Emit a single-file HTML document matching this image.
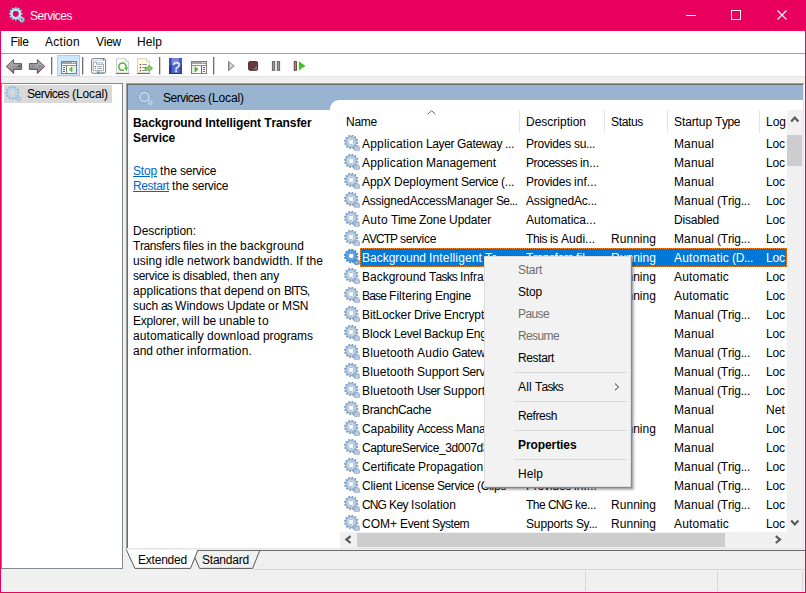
<!DOCTYPE html>
<html><head><meta charset="utf-8"><title>Services</title>
<style>
*{box-sizing:border-box;margin:0;padding:0}
html,body{width:806px;height:593px;overflow:hidden;background:#f0f0f0}
body{font-family:"Liberation Sans",sans-serif;font-size:12px;color:#000;position:relative;font-kerning:none}
body>span{position:absolute;white-space:pre;line-height:15px;height:15px}
body>div,body>i,body>svg{position:absolute;display:block}
.w{color:#fff}
.d{color:#6d6d6d}
.lnk{color:#0066cc;text-decoration:underline}
#pinkL{left:0;top:0;width:1px;height:593px;background:#e8005c}
#pinkR{left:805px;top:0;width:1px;height:593px;background:#e8005c}
#pinkB{left:0;top:592px;width:806px;height:1px;background:#e8005c}
#title{left:0;top:0;width:806px;height:31px;background:#e8005c}
#menu{left:1px;top:31px;width:804px;height:22px;background:#fff}
#menuline{left:1px;top:53px;width:804px;height:1px;background:#a0a0a0}
#tb{left:1px;top:54px;width:804px;height:22px;background:#fff}
#tbline{left:1px;top:76px;width:804px;height:1px;background:#e3e3e3}
#left{left:1px;top:83px;width:122px;height:486px;background:#fff;border:1px solid #828790}
#treesel{left:4px;top:85px;width:108px;height:18px;background:#d9d9d9}
#right{left:126px;top:83px;width:678px;height:466px;background:#fff;border-left:1px solid #a0a0a0;border-top:1px solid #a0a0a0}
#rightin{left:127px;top:84px;width:676px;height:464px;border-left:1px solid #696969;border-top:1px solid #696969}
#rightR{left:803px;top:85px;width:2px;height:464px;background:linear-gradient(90deg,#e3e3e3 0 1px,#fff 1px 2px)}
#hdr{left:128px;top:85px;width:675px;height:25px;background:#99b4d1}
#list{left:330px;top:100px;width:473px;height:449px;background:#fff;border-top-left-radius:9px}
.selbg{left:360px;width:427px;height:19px;background:repeating-linear-gradient(90deg,#ff8728 0 1px,transparent 1px 2px) 0 0/100% 1px no-repeat,repeating-linear-gradient(90deg,#ff8728 0 1px,transparent 1px 2px) 0 100%/100% 1px no-repeat,repeating-linear-gradient(0deg,#ff8728 0 1px,transparent 1px 2px) 0 0/1px 100% no-repeat,repeating-linear-gradient(0deg,#ff8728 0 1px,transparent 1px 2px) 100% 0/1px 100% no-repeat,#0078d7}
.sep{top:110px;width:1px;height:23px;background:#e5e5e5}
#vs{left:787px;top:110px;width:16px;height:422px;background:#f0f0f0}
#vthumb{left:787px;top:135px;width:15px;height:31px;background:#cdcdcd}
#hs{left:340px;top:532px;width:463px;height:16px;background:#f0f0f0}
#hthumb{left:357px;top:533px;width:368px;height:14px;background:#cdcdcd}
#l549{left:128px;top:548px;width:675px;height:1px;background:#e3e3e3}
#l550{left:197px;top:550px;width:608px;height:1px;background:#696969}
#dots1{left:262px;top:565px;width:542px;height:1px;background:repeating-linear-gradient(90deg,#e2e2e2 0 1px,transparent 1px 8px)}
#dots2{left:11px;top:582px;width:566px;height:1px;background:repeating-linear-gradient(90deg,#e6e6e6 0 1px,transparent 1px 8px)}
#sbline{left:253px;top:569px;width:552px;height:1px;background:#d7d7d7}
.sbsep{top:571px;width:1px;height:20px;background:#d7d7d7}
#ctx{left:484px;top:256px;width:147px;height:231px;background:#f2f2f2;border:1px solid #dcdcdc;box-shadow:1px 1px 0 0.3px #868c94,2.5px 2.5px 2px 0 rgba(0,0,0,.28)}
.cs{left:514px;width:113px;height:1px;background:#d7d7d7}
</style></head><body>
<svg width="0" height="0"><defs>
<radialGradient id="gg" cx="7.2" cy="6.9" r="7.2" gradientUnits="userSpaceOnUse"><stop offset="0.33" stop-color="#788290"/><stop offset="0.41" stop-color="#d2e2f0"/><stop offset="0.56" stop-color="#b6cee4"/><stop offset="0.78" stop-color="#8caacc"/><stop offset="1" stop-color="#6a8cb8"/></radialGradient>
<g id="gear"><path d="M13.00 6.90 L14.38 7.39 L14.08 9.02 L12.61 8.98 L12.22 9.80 L13.18 10.92 L12.10 12.17 L10.85 11.41 L10.10 11.92 L10.37 13.37 L8.81 13.92 L8.11 12.63 L7.20 12.70 L6.71 14.08 L5.08 13.78 L5.12 12.31 L4.30 11.92 L3.18 12.88 L1.93 11.80 L2.69 10.55 L2.18 9.80 L0.73 10.07 L0.18 8.51 L1.47 7.81 L1.40 6.90 L0.02 6.41 L0.32 4.78 L1.79 4.82 L2.18 4.00 L1.22 2.88 L2.30 1.63 L3.55 2.39 L4.30 1.88 L4.03 0.43 L5.59 -0.12 L6.29 1.17 L7.20 1.10 L7.69 -0.28 L9.32 0.02 L9.28 1.49 L10.10 1.88 L11.22 0.92 L12.47 2.00 L11.71 3.25 L12.22 4.00 L13.67 3.73 L14.22 5.29 L12.93 5.99Z M9.60 6.90 A2.4 2.4 0 1 0 4.80 6.90 A2.4 2.4 0 1 0 9.60 6.90Z" fill="url(#gg)" fill-rule="evenodd"/><path d="M9.8 12.4L11.4 15.2" stroke="#383880" stroke-width="0.7" opacity="0.55"/><path d="M14.96 13.84 L15.86 14.35 L15.35 15.33 L14.41 14.90 L14.02 15.23 L14.29 16.23 L13.24 16.57 L12.88 15.60 L12.36 15.56 L11.85 16.46 L10.87 15.95 L11.30 15.01 L10.97 14.62 L9.97 14.89 L9.63 13.84 L10.60 13.48 L10.64 12.96 L9.74 12.45 L10.25 11.47 L11.19 11.90 L11.58 11.57 L11.31 10.57 L12.36 10.23 L12.72 11.20 L13.24 11.24 L13.75 10.34 L14.73 10.85 L14.30 11.79 L14.63 12.18 L15.63 11.91 L15.97 12.96 L15.00 13.32Z M13.70 13.40 A0.9 0.9 0 1 0 11.90 13.40 A0.9 0.9 0 1 0 13.70 13.40Z" fill="#ccdcec" fill-rule="evenodd" stroke="#7490b8" stroke-width="0.6"/></g>
<g id="gearsel"><path d="M13.00 6.90 L14.38 7.39 L14.08 9.02 L12.61 8.98 L12.22 9.80 L13.18 10.92 L12.10 12.17 L10.85 11.41 L10.10 11.92 L10.37 13.37 L8.81 13.92 L8.11 12.63 L7.20 12.70 L6.71 14.08 L5.08 13.78 L5.12 12.31 L4.30 11.92 L3.18 12.88 L1.93 11.80 L2.69 10.55 L2.18 9.80 L0.73 10.07 L0.18 8.51 L1.47 7.81 L1.40 6.90 L0.02 6.41 L0.32 4.78 L1.79 4.82 L2.18 4.00 L1.22 2.88 L2.30 1.63 L3.55 2.39 L4.30 1.88 L4.03 0.43 L5.59 -0.12 L6.29 1.17 L7.20 1.10 L7.69 -0.28 L9.32 0.02 L9.28 1.49 L10.10 1.88 L11.22 0.92 L12.47 2.00 L11.71 3.25 L12.22 4.00 L13.67 3.73 L14.22 5.29 L12.93 5.99Z M9.60 6.90 A2.4 2.4 0 1 0 4.80 6.90 A2.4 2.4 0 1 0 9.60 6.90Z" fill="#0078d7" fill-opacity="0.5" fill-rule="evenodd"/><path d="M14.96 13.84 L15.86 14.35 L15.35 15.33 L14.41 14.90 L14.02 15.23 L14.29 16.23 L13.24 16.57 L12.88 15.60 L12.36 15.56 L11.85 16.46 L10.87 15.95 L11.30 15.01 L10.97 14.62 L9.97 14.89 L9.63 13.84 L10.60 13.48 L10.64 12.96 L9.74 12.45 L10.25 11.47 L11.19 11.90 L11.58 11.57 L11.31 10.57 L12.36 10.23 L12.72 11.20 L13.24 11.24 L13.75 10.34 L14.73 10.85 L14.30 11.79 L14.63 12.18 L15.63 11.91 L15.97 12.96 L15.00 13.32Z M13.70 13.40 A0.9 0.9 0 1 0 11.90 13.40 A0.9 0.9 0 1 0 13.70 13.40Z" fill="#0078d7" fill-opacity="0.5" fill-rule="evenodd"/></g>
<g id="gear2"><g opacity="1.0"><path d="M6.83 2.59 L7.01 0.95 L8.59 0.95 L8.77 2.59 L9.57 2.80 L10.54 1.47 L11.91 2.26 L11.24 3.77 L11.83 4.36 L13.34 3.69 L14.13 5.06 L12.80 6.03 L13.01 6.83 L14.65 7.01 L14.65 8.59 L13.01 8.77 L12.80 9.57 L14.13 10.54 L13.34 11.91 L11.83 11.24 L11.24 11.83 L11.91 13.34 L10.54 14.13 L9.57 12.80 L8.77 13.01 L8.59 14.65 L7.01 14.65 L6.83 13.01 L6.03 12.80 L5.06 14.13 L3.69 13.34 L4.36 11.83 L3.77 11.24 L2.26 11.91 L1.47 10.54 L2.80 9.57 L2.59 8.77 L0.95 8.59 L0.95 7.01 L2.59 6.83 L2.80 6.03 L1.47 5.06 L2.26 3.69 L3.77 4.36 L4.36 3.77 L3.69 2.26 L5.06 1.47 L6.03 2.80Z M10.90 7.80 A3.1 3.1 0 1 0 4.70 7.80 A3.1 3.1 0 1 0 10.90 7.80Z" fill="#8fd0e6" fill-rule="evenodd"/><circle cx="7.8" cy="7.8" r="4.2" fill="none" stroke="#b9e6f4" stroke-width="2.2"/><path d="M15.96 14.04 L16.76 14.52 L16.27 15.47 L15.41 15.10 L15.02 15.43 L15.24 16.34 L14.23 16.67 L13.88 15.80 L13.36 15.76 L12.88 16.56 L11.93 16.07 L12.30 15.21 L11.97 14.82 L11.06 15.04 L10.73 14.03 L11.60 13.68 L11.64 13.16 L10.84 12.68 L11.33 11.73 L12.19 12.10 L12.58 11.77 L12.36 10.86 L13.37 10.53 L13.72 11.40 L14.24 11.44 L14.72 10.64 L15.67 11.13 L15.30 11.99 L15.63 12.38 L16.54 12.16 L16.87 13.17 L16.00 13.52Z M14.60 13.60 A0.8 0.8 0 1 0 13.00 13.60 A0.8 0.8 0 1 0 14.60 13.60Z" fill="#9fd4ea" fill-rule="evenodd"/></g></g><g id="gear2t"><g opacity="1.0"><path d="M7.58 3.59 L7.76 1.95 L9.34 1.95 L9.52 3.59 L10.32 3.80 L11.29 2.47 L12.66 3.26 L11.99 4.77 L12.58 5.36 L14.09 4.69 L14.88 6.06 L13.55 7.03 L13.76 7.83 L15.40 8.01 L15.40 9.59 L13.76 9.77 L13.55 10.57 L14.88 11.54 L14.09 12.91 L12.58 12.24 L11.99 12.83 L12.66 14.34 L11.29 15.13 L10.32 13.80 L9.52 14.01 L9.34 15.65 L7.76 15.65 L7.58 14.01 L6.78 13.80 L5.81 15.13 L4.44 14.34 L5.11 12.83 L4.52 12.24 L3.01 12.91 L2.22 11.54 L3.55 10.57 L3.34 9.77 L1.70 9.59 L1.70 8.01 L3.34 7.83 L3.55 7.03 L2.22 6.06 L3.01 4.69 L4.52 5.36 L5.11 4.77 L4.44 3.26 L5.81 2.47 L6.78 3.80Z M11.65 8.80 A3.1 3.1 0 1 0 5.45 8.80 A3.1 3.1 0 1 0 11.65 8.80Z" fill="#86b0dc" fill-rule="evenodd"/><circle cx="8.55" cy="8.8" r="4.2" fill="none" stroke="#bcd8ee" stroke-width="2.2"/><path d="M16.71 15.04 L17.51 15.52 L17.02 16.47 L16.16 16.10 L15.77 16.43 L15.99 17.34 L14.98 17.67 L14.63 16.80 L14.11 16.76 L13.63 17.56 L12.68 17.07 L13.05 16.21 L12.72 15.82 L11.81 16.04 L11.48 15.03 L12.35 14.68 L12.39 14.16 L11.59 13.68 L12.08 12.73 L12.94 13.10 L13.33 12.77 L13.11 11.86 L14.12 11.53 L14.47 12.40 L14.99 12.44 L15.47 11.64 L16.42 12.13 L16.05 12.99 L16.38 13.38 L17.29 13.16 L17.62 14.17 L16.75 14.52Z M15.35 14.60 A0.8 0.8 0 1 0 13.75 14.60 A0.8 0.8 0 1 0 15.35 14.60Z" fill="#a4c6e6" fill-rule="evenodd"/></g></g><g id="gear2h"><g opacity="1.0"><path d="M6.43 2.69 L6.61 1.05 L8.19 1.05 L8.37 2.69 L9.17 2.90 L10.14 1.57 L11.51 2.36 L10.84 3.87 L11.43 4.46 L12.94 3.79 L13.73 5.16 L12.40 6.13 L12.61 6.93 L14.25 7.11 L14.25 8.69 L12.61 8.87 L12.40 9.67 L13.73 10.64 L12.94 12.01 L11.43 11.34 L10.84 11.93 L11.51 13.44 L10.14 14.23 L9.17 12.90 L8.37 13.11 L8.19 14.75 L6.61 14.75 L6.43 13.11 L5.63 12.90 L4.66 14.23 L3.29 13.44 L3.96 11.93 L3.37 11.34 L1.86 12.01 L1.07 10.64 L2.40 9.67 L2.19 8.87 L0.55 8.69 L0.55 7.11 L2.19 6.93 L2.40 6.13 L1.07 5.16 L1.86 3.79 L3.37 4.46 L3.96 3.87 L3.29 2.36 L4.66 1.57 L5.63 2.90Z M10.50 7.90 A3.1 3.1 0 1 0 4.30 7.90 A3.1 3.1 0 1 0 10.50 7.90Z" fill="#87a5c9" fill-rule="evenodd"/><circle cx="7.4" cy="7.9" r="4.5" fill="none" stroke="#cbe2f5" stroke-width="1.5"/><path d="M15.56 14.14 L16.36 14.62 L15.87 15.57 L15.01 15.20 L14.62 15.53 L14.84 16.44 L13.83 16.77 L13.48 15.90 L12.96 15.86 L12.48 16.66 L11.53 16.17 L11.90 15.31 L11.57 14.92 L10.66 15.14 L10.33 14.13 L11.20 13.78 L11.24 13.26 L10.44 12.78 L10.93 11.83 L11.79 12.20 L12.18 11.87 L11.96 10.96 L12.97 10.63 L13.32 11.50 L13.84 11.54 L14.32 10.74 L15.27 11.23 L14.90 12.09 L15.23 12.48 L16.14 12.26 L16.47 13.27 L15.60 13.62Z M14.20 13.70 A0.8 0.8 0 1 0 12.60 13.70 A0.8 0.8 0 1 0 14.20 13.70Z" fill="#b4cce6" fill-rule="evenodd"/></g></g>
</defs></svg>
<div id="title"></div>
<div id="menu"></div>
<div id="menuline"></div>
<div id="tb"></div>
<div id="tbline"></div>
<div id="left"></div><div id="treesel"></div>
<div id="right"></div><div id="rightin"></div><div id="rightR"></div>
<div id="hdr"></div>
<div id="list"></div>
<i class="sep" style="left:519px"></i><i class="sep" style="left:604px"></i><i class="sep" style="left:667px"></i><i class="sep" style="left:759px"></i>
<span style="left:133px;top:116px;letter-spacing:-0.092px;font-weight:bold;">Background Intelligent Transfer</span>
<span style="left:133px;top:131px;letter-spacing:-0.092px;font-weight:bold;">Service</span>
<span class="lnk" style="left:133px;top:164px;letter-spacing:-0.171px;">Stop</span>
<span style="left:160px;top:164px;word-spacing:-0.33px;"><span style="letter-spacing:0.11px">the</span> <span style="letter-spacing:-0.29px">service</span></span>
<span class="lnk" style="left:133px;top:179px;letter-spacing:-0.383px;">Restart</span>
<span style="left:172px;top:179px;word-spacing:-0.33px;"><span style="letter-spacing:0.11px">the</span> <span style="letter-spacing:-0.29px">service</span></span>
<span style="left:133px;top:224px;letter-spacing:-0.030px;">Description:</span>
<span style="left:133px;top:239px;word-spacing:-0.33px;"><span style="letter-spacing:-0.41px">Transfers</span> <span style="letter-spacing:-0.07px">files</span> <span style="letter-spacing:0.33px">in</span> <span style="letter-spacing:0.11px">the</span> <span style="letter-spacing:0.13px">background</span></span>
<span style="left:133px;top:254px;word-spacing:-0.33px;"><span style="letter-spacing:0.06px">using</span> <span style="letter-spacing:0.08px">idle</span> <span style="letter-spacing:0.14px">network</span> <span style="letter-spacing:0.20px">bandwidth.</span> <span style="letter-spacing:0.17px">If</span> <span style="letter-spacing:0.11px">the</span></span>
<span style="left:133px;top:269px;word-spacing:-0.33px;"><span style="letter-spacing:-0.29px">service</span> <span style="letter-spacing:-0.33px">is</span> <span style="letter-spacing:-0.12px">disabled,</span> <span style="letter-spacing:0.16px">then</span> <span style="letter-spacing:-0.12px">any</span></span>
<span style="left:133px;top:284px;word-spacing:-0.33px;"><span style="letter-spacing:0.05px">applications</span> <span style="letter-spacing:0.25px">that</span> <span style="letter-spacing:-0.01px">depend</span> <span style="letter-spacing:0.33px">on</span> <span style="letter-spacing:-1.00px">BITS,</span></span>
<span style="left:133px;top:299px;word-spacing:-0.33px;"><span style="letter-spacing:-0.09px">such</span> <span style="letter-spacing:-0.84px">as</span> <span style="letter-spacing:0.05px">Windows</span> <span style="letter-spacing:-0.12px">Update</span> <span style="letter-spacing:0.17px">or</span> <span style="letter-spacing:-0.22px">MSN</span></span>
<span style="left:133px;top:314px;word-spacing:-0.33px;"><span style="letter-spacing:-0.22px">Explorer,</span> <span style="letter-spacing:0.33px">will</span> <span style="letter-spacing:-0.17px">be</span> <span style="letter-spacing:-0.01px">unable</span> <span style="letter-spacing:0.50px">to</span></span>
<span style="left:133px;top:329px;word-spacing:-0.33px;"><span style="letter-spacing:0.07px">automatically</span> <span style="letter-spacing:0.20px">download</span> <span style="letter-spacing:-0.09px">programs</span></span>
<span style="left:133px;top:344px;word-spacing:-0.33px;"><span style="letter-spacing:-0.01px">and</span> <span style="letter-spacing:0.13px">other</span> <span style="letter-spacing:0.19px">information.</span></span>
<svg class="g" style="left:344px;top:135px" width="16" height="16" viewBox="0 0 16 16"><use href="#gear"/></svg>
<span style="left:362px;top:137px;word-spacing:-0.33px;"><span style="letter-spacing:0.21px">Application</span> <span style="letter-spacing:-0.40px">Layer</span> <span style="letter-spacing:-0.34px">Gateway</span> <span style="letter-spacing:-0.33px">...</span></span>
<span style="left:526px;top:137px;word-spacing:-0.33px;"><span style="letter-spacing:-0.21px">Provides</span> <span style="letter-spacing:-0.34px">su...</span></span>
<span style="left:674px;top:137px;letter-spacing:0.107px;">Manual</span>
<span style="left:766px;top:137px;letter-spacing:-0.116px;">Loc</span>
<svg class="g" style="left:344px;top:154px" width="16" height="16" viewBox="0 0 16 16"><use href="#gear"/></svg>
<span style="left:362px;top:156px;word-spacing:-0.33px;"><span style="letter-spacing:0.21px">Application</span> <span style="letter-spacing:-0.00px">Management</span></span>
<span style="left:526px;top:156px;word-spacing:-0.33px;"><span style="letter-spacing:-0.56px">Processes</span> <span style="letter-spacing:-0.07px">in...</span></span>
<span style="left:674px;top:156px;letter-spacing:0.107px;">Manual</span>
<span style="left:766px;top:156px;letter-spacing:-0.116px;">Loc</span>
<svg class="g" style="left:344px;top:173px" width="16" height="16" viewBox="0 0 16 16"><use href="#gear"/></svg>
<span style="left:362px;top:175px;word-spacing:-0.33px;"><span style="letter-spacing:-0.09px">AppX</span> <span style="letter-spacing:-0.00px">Deployment</span> <span style="letter-spacing:-0.43px">Service</span> <span style="letter-spacing:-0.25px">(...</span></span>
<span style="left:526px;top:175px;word-spacing:-0.33px;"><span style="letter-spacing:-0.21px">Provides</span> <span style="letter-spacing:0.05px">inf...</span></span>
<span style="left:674px;top:175px;letter-spacing:0.107px;">Manual</span>
<span style="left:766px;top:175px;letter-spacing:-0.116px;">Loc</span>
<svg class="g" style="left:344px;top:192px" width="16" height="16" viewBox="0 0 16 16"><use href="#gear"/></svg>
<span style="left:362px;top:194px;word-spacing:-0.33px;"><span style="letter-spacing:-0.21px">AssignedAccessManager</span> <span style="letter-spacing:-0.74px">Se...</span></span>
<span style="left:526px;top:194px;letter-spacing:-0.182px;">AssignedAc...</span>
<span style="left:674px;top:194px;word-spacing:-0.33px;"><span style="letter-spacing:0.11px">Manual</span> <span style="letter-spacing:-0.21px">(Trig...</span></span>
<span style="left:766px;top:194px;letter-spacing:-0.116px;">Loc</span>
<svg class="g" style="left:344px;top:211px" width="16" height="16" viewBox="0 0 16 16"><use href="#gear"/></svg>
<span style="left:362px;top:213px;word-spacing:-0.33px;"><span style="letter-spacing:0.33px">Auto</span> <span style="letter-spacing:-0.42px">Time</span> <span style="letter-spacing:-0.09px">Zone</span> <span style="letter-spacing:-0.10px">Updater</span></span>
<span style="left:526px;top:213px;letter-spacing:-0.002px;">Automatica...</span>
<span style="left:674px;top:213px;letter-spacing:-0.212px;">Disabled</span>
<span style="left:766px;top:213px;letter-spacing:-0.116px;">Loc</span>
<svg class="g" style="left:344px;top:230px" width="16" height="16" viewBox="0 0 16 16"><use href="#gear"/></svg>
<span style="left:362px;top:232px;word-spacing:-0.33px;"><span style="letter-spacing:-1.00px">AVCTP</span> <span style="letter-spacing:-0.29px">service</span></span>
<span style="left:526px;top:232px;word-spacing:-0.33px;"><span style="letter-spacing:-0.42px">This</span> <span style="letter-spacing:-0.33px">is</span> <span style="letter-spacing:-0.00px">Audi...</span></span>
<span style="left:611px;top:232px;letter-spacing:0.043px;">Running</span>
<span style="left:674px;top:232px;word-spacing:-0.33px;"><span style="letter-spacing:0.11px">Manual</span> <span style="letter-spacing:-0.21px">(Trig...</span></span>
<span style="left:766px;top:232px;letter-spacing:-0.116px;">Loc</span>
<div class="selbg" style="top:248px"></div>
<svg class="g" style="left:344px;top:249px" width="16" height="16" viewBox="0 0 16 16"><use href="#gear"/><use href="#gearsel"/></svg>
<span class="w" style="left:362px;top:251px;word-spacing:-0.33px;"><span style="letter-spacing:-0.00px">Background</span> <span style="letter-spacing:0.15px">Intelligent</span> <span style="letter-spacing:-0.47px">Tr...</span></span>
<span class="w" style="left:526px;top:251px;word-spacing:-0.33px;"><span style="letter-spacing:-0.41px">Transfers</span> <span style="letter-spacing:0.06px">fil...</span></span>
<span class="w" style="left:611px;top:251px;letter-spacing:0.043px;">Running</span>
<span class="w" style="left:674px;top:251px;word-spacing:-0.33px;"><span style="letter-spacing:0.18px">Automatic</span> <span style="letter-spacing:-0.33px">(D...</span></span>
<span class="w" style="left:766px;top:251px;letter-spacing:-0.116px;">Loc</span>
<svg class="g" style="left:344px;top:268px" width="16" height="16" viewBox="0 0 16 16"><use href="#gear"/></svg>
<span style="left:362px;top:270px;word-spacing:-0.33px;"><span style="letter-spacing:-0.00px">Background</span> <span style="letter-spacing:-0.80px">Tasks</span> <span style="letter-spacing:-0.12px">Infrastr...</span></span>
<span style="left:526px;top:270px;word-spacing:-0.33px;"><span style="letter-spacing:0.05px">Windows</span> <span style="letter-spacing:-0.07px">in...</span></span>
<span style="left:611px;top:270px;letter-spacing:0.043px;">Running</span>
<span style="left:674px;top:270px;letter-spacing:0.183px;">Automatic</span>
<span style="left:766px;top:270px;letter-spacing:-0.116px;">Loc</span>
<svg class="g" style="left:344px;top:287px" width="16" height="16" viewBox="0 0 16 16"><use href="#gear"/></svg>
<span style="left:362px;top:289px;word-spacing:-0.33px;"><span style="letter-spacing:-0.84px">Base</span> <span style="letter-spacing:0.04px">Filtering</span> <span style="letter-spacing:-0.23px">Engine</span></span>
<span style="left:526px;top:289px;word-spacing:-0.33px;"><span style="letter-spacing:-0.56px">The</span> <span style="letter-spacing:-0.84px">Base</span> <span style="letter-spacing:-0.28px">Fil...</span></span>
<span style="left:611px;top:289px;letter-spacing:0.043px;">Running</span>
<span style="left:674px;top:289px;letter-spacing:0.183px;">Automatic</span>
<span style="left:766px;top:289px;letter-spacing:-0.116px;">Loc</span>
<svg class="g" style="left:344px;top:306px" width="16" height="16" viewBox="0 0 16 16"><use href="#gear"/></svg>
<span style="left:362px;top:308px;word-spacing:-0.33px;"><span style="letter-spacing:-0.11px">BitLocker</span> <span style="letter-spacing:-0.20px">Drive</span> <span style="letter-spacing:-0.09px">Encryptio...</span></span>
<span style="left:526px;top:308px;word-spacing:-0.33px;"><span style="letter-spacing:-1.39px">BDESVC</span> <span style="letter-spacing:-0.22px">hos...</span></span>
<span style="left:674px;top:308px;word-spacing:-0.33px;"><span style="letter-spacing:0.11px">Manual</span> <span style="letter-spacing:-0.21px">(Trig...</span></span>
<span style="left:766px;top:308px;letter-spacing:-0.116px;">Loc</span>
<svg class="g" style="left:344px;top:325px" width="16" height="16" viewBox="0 0 16 16"><use href="#gear"/></svg>
<span style="left:362px;top:327px;word-spacing:-0.33px;"><span style="letter-spacing:-0.07px">Block</span> <span style="letter-spacing:-0.34px">Level</span> <span style="letter-spacing:-0.17px">Backup</span> <span style="letter-spacing:-0.26px">Engine...</span></span>
<span style="left:526px;top:327px;word-spacing:-0.33px;"><span style="letter-spacing:-0.56px">The</span> <span style="letter-spacing:-0.67px">WBENG...</span></span>
<span style="left:674px;top:327px;letter-spacing:0.107px;">Manual</span>
<span style="left:766px;top:327px;letter-spacing:-0.116px;">Loc</span>
<svg class="g" style="left:344px;top:344px" width="16" height="16" viewBox="0 0 16 16"><use href="#gear"/></svg>
<span style="left:362px;top:346px;word-spacing:-0.33px;"><span style="letter-spacing:0.14px">Bluetooth</span> <span style="letter-spacing:0.26px">Audio</span> <span style="letter-spacing:-0.34px">Gateway</span> <span style="letter-spacing:-0.75px">S...</span></span>
<span style="left:526px;top:346px;word-spacing:-0.33px;"><span style="letter-spacing:-0.43px">Service</span> <span style="letter-spacing:-0.22px">sup...</span></span>
<span style="left:674px;top:346px;word-spacing:-0.33px;"><span style="letter-spacing:0.11px">Manual</span> <span style="letter-spacing:-0.21px">(Trig...</span></span>
<span style="left:766px;top:346px;letter-spacing:-0.116px;">Loc</span>
<svg class="g" style="left:344px;top:363px" width="16" height="16" viewBox="0 0 16 16"><use href="#gear"/></svg>
<span style="left:362px;top:365px;word-spacing:-0.33px;"><span style="letter-spacing:0.14px">Bluetooth</span> <span style="letter-spacing:-0.00px">Support</span> <span style="letter-spacing:-0.43px">Service</span></span>
<span style="left:526px;top:365px;word-spacing:-0.33px;"><span style="letter-spacing:-0.56px">The</span> <span style="letter-spacing:-0.07px">Bluetoo...</span></span>
<span style="left:674px;top:365px;word-spacing:-0.33px;"><span style="letter-spacing:0.11px">Manual</span> <span style="letter-spacing:-0.21px">(Trig...</span></span>
<span style="left:766px;top:365px;letter-spacing:-0.116px;">Loc</span>
<svg class="g" style="left:344px;top:382px" width="16" height="16" viewBox="0 0 16 16"><use href="#gear"/></svg>
<span style="left:362px;top:384px;word-spacing:-0.33px;"><span style="letter-spacing:0.14px">Bluetooth</span> <span style="letter-spacing:-0.58px">User</span> <span style="letter-spacing:-0.00px">Support</span> <span style="letter-spacing:-0.74px">Se...</span></span>
<span style="left:526px;top:384px;word-spacing:-0.33px;"><span style="letter-spacing:-0.56px">The</span> <span style="letter-spacing:-0.07px">Bluetoo...</span></span>
<span style="left:674px;top:384px;word-spacing:-0.33px;"><span style="letter-spacing:0.11px">Manual</span> <span style="letter-spacing:-0.21px">(Trig...</span></span>
<span style="left:766px;top:384px;letter-spacing:-0.116px;">Loc</span>
<svg class="g" style="left:344px;top:401px" width="16" height="16" viewBox="0 0 16 16"><use href="#gear"/></svg>
<span style="left:362px;top:403px;letter-spacing:-0.337px;">BranchCache</span>
<span style="left:526px;top:403px;word-spacing:-0.33px;"><span style="letter-spacing:-0.42px">This</span> <span style="letter-spacing:-0.30px">service...</span></span>
<span style="left:674px;top:403px;letter-spacing:0.107px;">Manual</span>
<span style="left:766px;top:403px;letter-spacing:0.109px;">Net</span>
<svg class="g" style="left:344px;top:420px" width="16" height="16" viewBox="0 0 16 16"><use href="#gear"/></svg>
<span style="left:362px;top:422px;word-spacing:-0.33px;"><span style="letter-spacing:-0.07px">Capability</span> <span style="letter-spacing:-0.45px">Access</span> <span style="letter-spacing:-0.15px">Manage...</span></span>
<span style="left:526px;top:422px;word-spacing:-0.33px;"><span style="letter-spacing:-0.21px">Provides</span> <span style="letter-spacing:-0.17px">fac...</span></span>
<span style="left:611px;top:422px;letter-spacing:0.043px;">Running</span>
<span style="left:674px;top:422px;letter-spacing:0.107px;">Manual</span>
<span style="left:766px;top:422px;letter-spacing:-0.116px;">Loc</span>
<svg class="g" style="left:344px;top:439px" width="16" height="16" viewBox="0 0 16 16"><use href="#gear"/></svg>
<span style="left:362px;top:441px;letter-spacing:-0.413px;">CaptureService_3d007d3</span>
<span style="left:526px;top:441px;word-spacing:-0.33px;"><span style="letter-spacing:-0.38px">OneCore</span> <span style="letter-spacing:-0.67px">Ca...</span></span>
<span style="left:674px;top:441px;letter-spacing:0.107px;">Manual</span>
<span style="left:766px;top:441px;letter-spacing:-0.116px;">Loc</span>
<svg class="g" style="left:344px;top:458px" width="16" height="16" viewBox="0 0 16 16"><use href="#gear"/></svg>
<span style="left:362px;top:460px;word-spacing:-0.33px;"><span style="letter-spacing:-0.09px">Certificate</span> <span style="letter-spacing:0.03px">Propagation</span></span>
<span style="left:526px;top:460px;word-spacing:-0.33px;"><span style="letter-spacing:-0.39px">Copies</span> <span style="letter-spacing:-0.34px">user...</span></span>
<span style="left:674px;top:460px;word-spacing:-0.33px;"><span style="letter-spacing:0.11px">Manual</span> <span style="letter-spacing:-0.21px">(Trig...</span></span>
<span style="left:766px;top:460px;letter-spacing:-0.116px;">Loc</span>
<svg class="g" style="left:344px;top:477px" width="16" height="16" viewBox="0 0 16 16"><use href="#gear"/></svg>
<span style="left:362px;top:479px;word-spacing:-0.33px;"><span style="letter-spacing:-0.11px">Client</span> <span style="letter-spacing:-0.34px">License</span> <span style="letter-spacing:-0.43px">Service</span> <span style="letter-spacing:-0.28px">(Clips</span></span>
<span style="left:526px;top:479px;word-spacing:-0.33px;"><span style="letter-spacing:-0.21px">Provides</span> <span style="letter-spacing:0.05px">inf...</span></span>
<span style="left:674px;top:479px;word-spacing:-0.33px;"><span style="letter-spacing:0.11px">Manual</span> <span style="letter-spacing:-0.21px">(Trig...</span></span>
<span style="left:766px;top:479px;letter-spacing:-0.116px;">Loc</span>
<svg class="g" style="left:344px;top:496px" width="16" height="16" viewBox="0 0 16 16"><use href="#gear"/></svg>
<span style="left:362px;top:498px;word-spacing:-0.33px;"><span style="letter-spacing:-0.89px">CNG</span> <span style="letter-spacing:-0.56px">Key</span> <span style="letter-spacing:0.03px">Isolation</span></span>
<span style="left:526px;top:498px;word-spacing:-0.33px;"><span style="letter-spacing:-0.56px">The</span> <span style="letter-spacing:-0.89px">CNG</span> <span style="letter-spacing:-0.34px">ke...</span></span>
<span style="left:611px;top:498px;letter-spacing:0.043px;">Running</span>
<span style="left:674px;top:498px;word-spacing:-0.33px;"><span style="letter-spacing:0.11px">Manual</span> <span style="letter-spacing:-0.21px">(Trig...</span></span>
<span style="left:766px;top:498px;letter-spacing:-0.116px;">Loc</span>
<svg class="g" style="left:344px;top:515px" width="16" height="16" viewBox="0 0 16 16"><use href="#gear"/></svg>
<span style="left:362px;top:517px;word-spacing:-0.33px;"><span style="letter-spacing:-0.00px">COM+</span> <span style="letter-spacing:-0.34px">Event</span> <span style="letter-spacing:-0.50px">System</span></span>
<span style="left:526px;top:517px;word-spacing:-0.33px;"><span style="letter-spacing:-0.13px">Supports</span> <span style="letter-spacing:-0.60px">Sy...</span></span>
<span style="left:611px;top:517px;letter-spacing:0.043px;">Running</span>
<span style="left:674px;top:517px;letter-spacing:0.183px;">Automatic</span>
<span style="left:766px;top:517px;letter-spacing:-0.116px;">Loc</span>
<div id="vs"></div><div id="vthumb"></div>
<div id="hs"></div><div id="hthumb"></div>
<div id="l549"></div><div id="l550"></div>
<div id="dots1"></div><div id="dots2"></div><div id="sbline"></div><i class="sbsep" style="left:585px"></i><i class="sbsep" style="left:717px"></i><i class="sbsep" style="left:802px"></i>

<!-- title controls -->
<svg style="left:680px;top:5px" width="120" height="20" viewBox="680 5 120 20"><g stroke="#fff" stroke-width="1" fill="none" shape-rendering="crispEdges"><path d="M686 15.5H696"/><rect x="731.5" y="10.5" width="9" height="9"/></g><path d="M777.5 10.5L786.5 19.5M786.5 10.5L777.5 19.5" stroke="#fff" stroke-width="1.1" fill="none"/></svg>
<!-- gear icons -->
<svg style="left:8px;top:6px" width="18" height="18" viewBox="0 0 18 18"><use href="#gear2" color="#b4e2f2"/></svg>
<svg style="left:4px;top:84px" width="20" height="20" viewBox="0 0 20 20"><use href="#gear2t"/></svg>
<svg style="left:137px;top:89px" width="18" height="18" viewBox="0 0 18 18"><use href="#gear2h"/></svg>
<!-- toolbar -->
<svg id="tbi" style="left:0;top:54px" width="320" height="24" viewBox="0 54 320 24">
<defs><linearGradient id="ag" x1="0" y1="0" x2="0" y2="1"><stop offset="0" stop-color="#b4b4b4"/><stop offset="1" stop-color="#8c8c8c"/></linearGradient></defs>
<path d="M6.3 66.4L13.6 59.6V63.6H21.6V69.3H13.6V73.2Z" fill="url(#ag)" stroke="#5a5a5a" stroke-width="1" stroke-linejoin="miter"/>
<path d="M6.6 66.8L13.6 73.3V69.4H21.6" fill="none" stroke="#8a4a68" stroke-width="0.9"/>
<path d="M16.2 67.6L19.2 64.6H20.8V67.6Z" fill="#5e5e62" opacity="0.85"/><path d="M11 68L13.2 66.6H15.6" stroke="#8890a0" stroke-width="0.9" fill="none" opacity="0.8"/>
<path d="M44.7 66.4L37.4 59.6V63.6H29.4V69.3H37.4V73.2Z" fill="url(#ag)" stroke="#5a5a5a" stroke-width="1"/><path d="M31 65H34.4L35.6 66.4L34.4 67.8H31ZM38.6 65.2H41.2L42.4 66.6L41 68H38.6Z" fill="#7c8898" opacity="0.75"/>
<path d="M44.4 66.8L37.4 73.3V69.4H29.4" fill="none" stroke="#8a4a68" stroke-width="0.9"/>
<g fill="#6c6c74"><rect x="51" y="57" width="1.3" height="17.5"/><rect x="82" y="57" width="1.3" height="17.5"/><rect x="159" y="57" width="1.3" height="17.5"/><rect x="213" y="57" width="1.3" height="17.5"/></g>
<rect x="57.5" y="55.5" width="22" height="20" fill="#cce8ff" stroke="#99d1ff"/>
<!-- icon1 -->
<g shape-rendering="crispEdges"><rect x="61.5" y="61.5" width="15" height="12" fill="#fff" stroke="#808080"/><rect x="62" y="62" width="14" height="2" fill="#a4a4a4"/><rect x="62" y="65" width="14" height="1" fill="#909090"/><rect x="66" y="66" width="1" height="7" fill="#808080"/><rect x="73" y="66" width="3" height="7" fill="#ececec"/><rect x="72" y="62" width="1" height="1" fill="#fff"/><rect x="74" y="62" width="1" height="1" fill="#fff"/>
<rect x="63" y="67" width="2" height="1" fill="#3a62d8"/><rect x="63" y="69" width="2" height="1" fill="#3a62d8"/><rect x="63" y="71" width="2" height="1" fill="#3a62d8"/></g>
<path d="M69.2 69.3L72 66.9V71.7Z" fill="#7cd060" stroke="#3cac1c" stroke-width="0.8"/>
<!-- icon2 properties -->
<rect x="91.6" y="58.6" width="14" height="14.7" rx="1.7" fill="#fff" stroke="#6a7282" stroke-width="0.95"/>
<path d="M92.4 60.6H105" stroke="#c4c6cc" stroke-width="0.7"/>
<path d="M93.4 62.2H96.6V64.3H103.5V70.7H93.4Z" fill="#fff" stroke="#8e8e90" stroke-width="0.8"/>
<rect x="97" y="62" width="6" height="2" fill="#a9c9e3"/><rect x="97.6" y="62.6" width="1.8" height="1" fill="#fff"/><rect x="100.2" y="62.6" width="1.8" height="1" fill="#fff"/>
<circle cx="95.5" cy="66.5" r="0.75" fill="#1878f0"/><circle cx="95.5" cy="68.4" r="0.55" fill="#9a9490"/>
<rect x="97.1" y="66.1" width="4.8" height="0.8" fill="#8e8e90"/><rect x="97.1" y="68" width="4.8" height="0.8" fill="#8e8e90"/>
<rect x="96.9" y="71.3" width="3.1" height="1.7" fill="#2f9cf0"/><rect x="96.9" y="71.1" width="3.1" height="0.6" fill="#8cecff"/><rect x="101.2" y="72" width="2.6" height="1" fill="#a4a4a8"/><rect x="102.9" y="59" width="1.2" height="1.1" fill="#4866a8"/>
<!-- icon3 refresh -->
<path d="M116.5 58.7H125.6L128.6 61.7V73.3H116.5Z" fill="#fff" stroke="#b8bcc4" stroke-width="0.8"/><path d="M125.6 58.7V61.7H128.6" fill="#eef0f4" stroke="#b8bcc4" stroke-width="0.7"/><path d="M116.2 73.4H128.9" stroke="#8a4a68" stroke-width="1"/>
<path d="M124 70A3.7 3.7 0 1 1 126.1 67.2" fill="none" stroke="#4cb42c" stroke-width="1.5"/><path d="M124.2 67.2H128L126.4 71.2Z" fill="#4cb42c"/>
<!-- icon4 export -->
<path d="M137.5 58.7H146.6L149.6 61.7V73.3H137.5Z" fill="#fffce2" stroke="#c8c4b4" stroke-width="0.8"/><path d="M146.6 58.7V61.7H149.6" fill="#fff" stroke="#c8c4b4" stroke-width="0.7"/><path d="M137.2 73.4H149.9" stroke="#8a4a68" stroke-width="1"/>
<g fill="#7a2a38"><rect x="139.8" y="64" width="1.2" height="1.2"/><rect x="139.8" y="67" width="1.2" height="1.2"/><rect x="139.8" y="70" width="1.2" height="1.2"/></g>
<g fill="#7a8498"><rect x="142.3" y="64.1" width="4.6" height="0.9"/><rect x="142.3" y="67.1" width="3" height="0.9"/><rect x="142.3" y="70.1" width="4.6" height="0.9"/></g>
<path d="M145 67.4H148.8V65.4L152.6 68.3L148.8 71.3V69.3H145Z" fill="#9cc890" stroke="#44b424" stroke-width="0.9"/>
<!-- help -->
<rect x="169" y="58" width="13" height="16" fill="#5068cc"/><rect x="169" y="58" width="13" height="6" fill="#7c84d4"/><rect x="169" y="58" width="2.6" height="8" fill="#2c50b8"/><rect x="169" y="66" width="2.6" height="8" fill="#383084"/><rect x="179" y="58" width="3" height="6" fill="#3460c8"/><rect x="179.6" y="64" width="2.4" height="10" fill="#3a44a0"/><rect x="169" y="73" width="13" height="1" fill="#2c2c80"/>
<text x="176.3" y="71.6" font-family="Liberation Sans, sans-serif" font-size="14.5" fill="#f0f2ff" text-anchor="middle" stroke="#dfe3fa" stroke-width="0.35">?</text>
<!-- icon6 -->
<g shape-rendering="crispEdges"><rect x="191.5" y="61.5" width="15" height="12" fill="#fff" stroke="#808080"/><rect x="192" y="62" width="14" height="2" fill="#a4a4a4"/><rect x="192" y="65" width="14" height="1" fill="#909090"/><rect x="201" y="66" width="1" height="7" fill="#5a6a8a"/><rect x="192" y="66" width="2" height="7" fill="#e8e8e8"/><rect x="202" y="62" width="1" height="1" fill="#fff"/><rect x="204" y="62" width="1" height="1" fill="#fff"/>
<rect x="203" y="67" width="2" height="1" fill="#3a62d8"/><rect x="203" y="69" width="2" height="1" fill="#3a62d8"/><rect x="203" y="71" width="2" height="1" fill="#3a62d8"/></g>
<path d="M198 69.3L195 66.7V71.9Z" fill="#58c038" stroke="#3cac1c" stroke-width="0.8"/>
<!-- media -->
<path d="M228.6 61.6L234.2 65.9L228.6 70.3Z" fill="#d4d4d4" stroke="#8c8c8c" stroke-width="0.9"/><path d="M228.7 61.4V70.5" stroke="#787878" stroke-width="1.1"/><path d="M228.6 70.3L234.2 65.9" stroke="#a08090" stroke-width="0.8"/>
<rect x="248.6" y="61.6" width="9" height="8.7" rx="1.4" fill="#6a3a3a" stroke="#4e2c2c" stroke-width="1"/><path d="M257 65.5V69.6H252.8Z" fill="#7c7474"/>
<rect x="272.4" y="61.6" width="2.3" height="8.7" fill="#989898" stroke="#646464" stroke-width="1"/><rect x="277.3" y="61.6" width="2.3" height="8.7" fill="#989898" stroke="#646464" stroke-width="1"/>
<rect x="294.2" y="61.6" width="2.2" height="8.7" fill="#a09090" stroke="#5c3030" stroke-width="0.9"/>
<path d="M298.8 61.2L305.5 65.9L298.8 70.7Z" fill="#40c020"/><path d="M299.2 70L303 66.8" stroke="#a8e098" stroke-width="0.8"/>
</svg>
<!-- sort arrow / scrollbar arrows -->
<svg style="left:424px;top:108px" width="14" height="8" viewBox="424 108 14 8"><path d="M427.6 114.3L431.5 110.6L435.4 114.3" fill="none" stroke="#686868" stroke-width="1"/></svg>
<svg style="left:787px;top:110px" width="17" height="24" viewBox="787 110 17 24"><path d="M791.2 121.6L794.8 117.6L798.4 121.6" fill="none" stroke="#5a5a5a" stroke-width="2.2"/></svg>
<svg style="left:787px;top:512px" width="17" height="24" viewBox="787 512 17 24"><path d="M791.2 520.4L794.8 524.4L798.4 520.4" fill="none" stroke="#5a5a5a" stroke-width="2.2"/></svg>
<svg style="left:340px;top:532px" width="17" height="17" viewBox="340 532 17 17"><path d="M350.6 536.2L346.4 539.6L350.6 543" fill="none" stroke="#5a5a5a" stroke-width="2.2"/></svg>
<svg style="left:770px;top:532px" width="17" height="17" viewBox="770 532 17 17"><path d="M775.8 536.2L780 539.6L775.8 543" fill="none" stroke="#5a5a5a" stroke-width="2.2"/></svg>
<!-- tabs -->
<svg style="left:120px;top:546px" width="150" height="26" viewBox="120 546 150 26"><path d="M126 549.5L134.8 568.5H190.6L198 550.5" fill="#fff" stroke="none"/><path d="M126.3 549.6L134.9 568.4H190.5L197.8 550.4" fill="none" stroke="#5a5a5a" stroke-width="1"/><path d="M195 558L199.6 568.4H252.6L259.8 550.4" fill="none" stroke="#5a5a5a" stroke-width="1"/></svg>
<span class="w" style="left:30px;top:9px;letter-spacing:-0.502px;">Services</span>
<span style="left:10.5px;top:35px;letter-spacing:-0.334px;">File</span>
<span style="left:45px;top:35px;letter-spacing:0.275px;">Action</span>
<span style="left:96px;top:35px;letter-spacing:-0.252px;">View</span>
<span style="left:137px;top:35px;letter-spacing:0.080px;">Help</span>
<span style="left:27px;top:87px;word-spacing:-0.33px;"><span style="letter-spacing:-0.50px">Services</span> <span style="letter-spacing:-0.10px">(Local)</span></span>
<span style="left:163px;top:91px;word-spacing:-0.33px;"><span style="letter-spacing:-0.50px">Services</span> <span style="letter-spacing:-0.10px">(Local)</span></span>
<span style="left:346px;top:115px;letter-spacing:-0.252px;">Name</span>
<span style="left:526px;top:115px;letter-spacing:-0.002px;">Description</span>
<span style="left:611px;top:115px;letter-spacing:-0.337px;">Status</span>
<span style="left:674px;top:115px;word-spacing:-0.33px;"><span style="letter-spacing:-0.10px">Startup</span> <span style="letter-spacing:-0.42px">Type</span></span>
<span style="left:766px;top:115px;letter-spacing:-0.007px;">Log</span>
<span style="left:138px;top:553px;letter-spacing:-0.213px;">Extended</span>
<span style="left:202px;top:553px;letter-spacing:-0.213px;">Standard</span>
<div id="ctx"></div>
<i class="cs" style="top:372px"></i><i class="cs" style="top:401px"></i><i class="cs" style="top:430px"></i><i class="cs" style="top:459px"></i>
<span class="d" style="left:518px;top:263px;letter-spacing:-0.268px;">Start</span>
<span style="left:518px;top:285px;letter-spacing:-0.171px;">Stop</span>
<span class="d" style="left:518px;top:307px;letter-spacing:-0.605px;">Pause</span>
<span class="d" style="left:518px;top:329px;letter-spacing:-0.614px;">Resume</span>
<span style="left:518px;top:351px;letter-spacing:-0.383px;">Restart</span>
<span style="left:518px;top:380px;word-spacing:-0.33px;"><span style="letter-spacing:0.22px">All</span> <span style="letter-spacing:-0.80px">Tasks</span></span>
<span style="left:518px;top:409px;letter-spacing:-0.431px;">Refresh</span>
<span style="left:518px;top:467px;letter-spacing:0.080px;">Help</span>
<span style="left:518px;top:438px;letter-spacing:-0.086px;font-weight:bold;">Properties</span>
<svg style="left:612px;top:381px" width="10" height="12" viewBox="612 381 10 12"><path d="M615 383.6L618.6 386.9L615 390.2" fill="none" stroke="#303030" stroke-width="1"/></svg>
<div id="pinkL"></div><div id="pinkR"></div><div id="pinkB"></div>
</body></html>
